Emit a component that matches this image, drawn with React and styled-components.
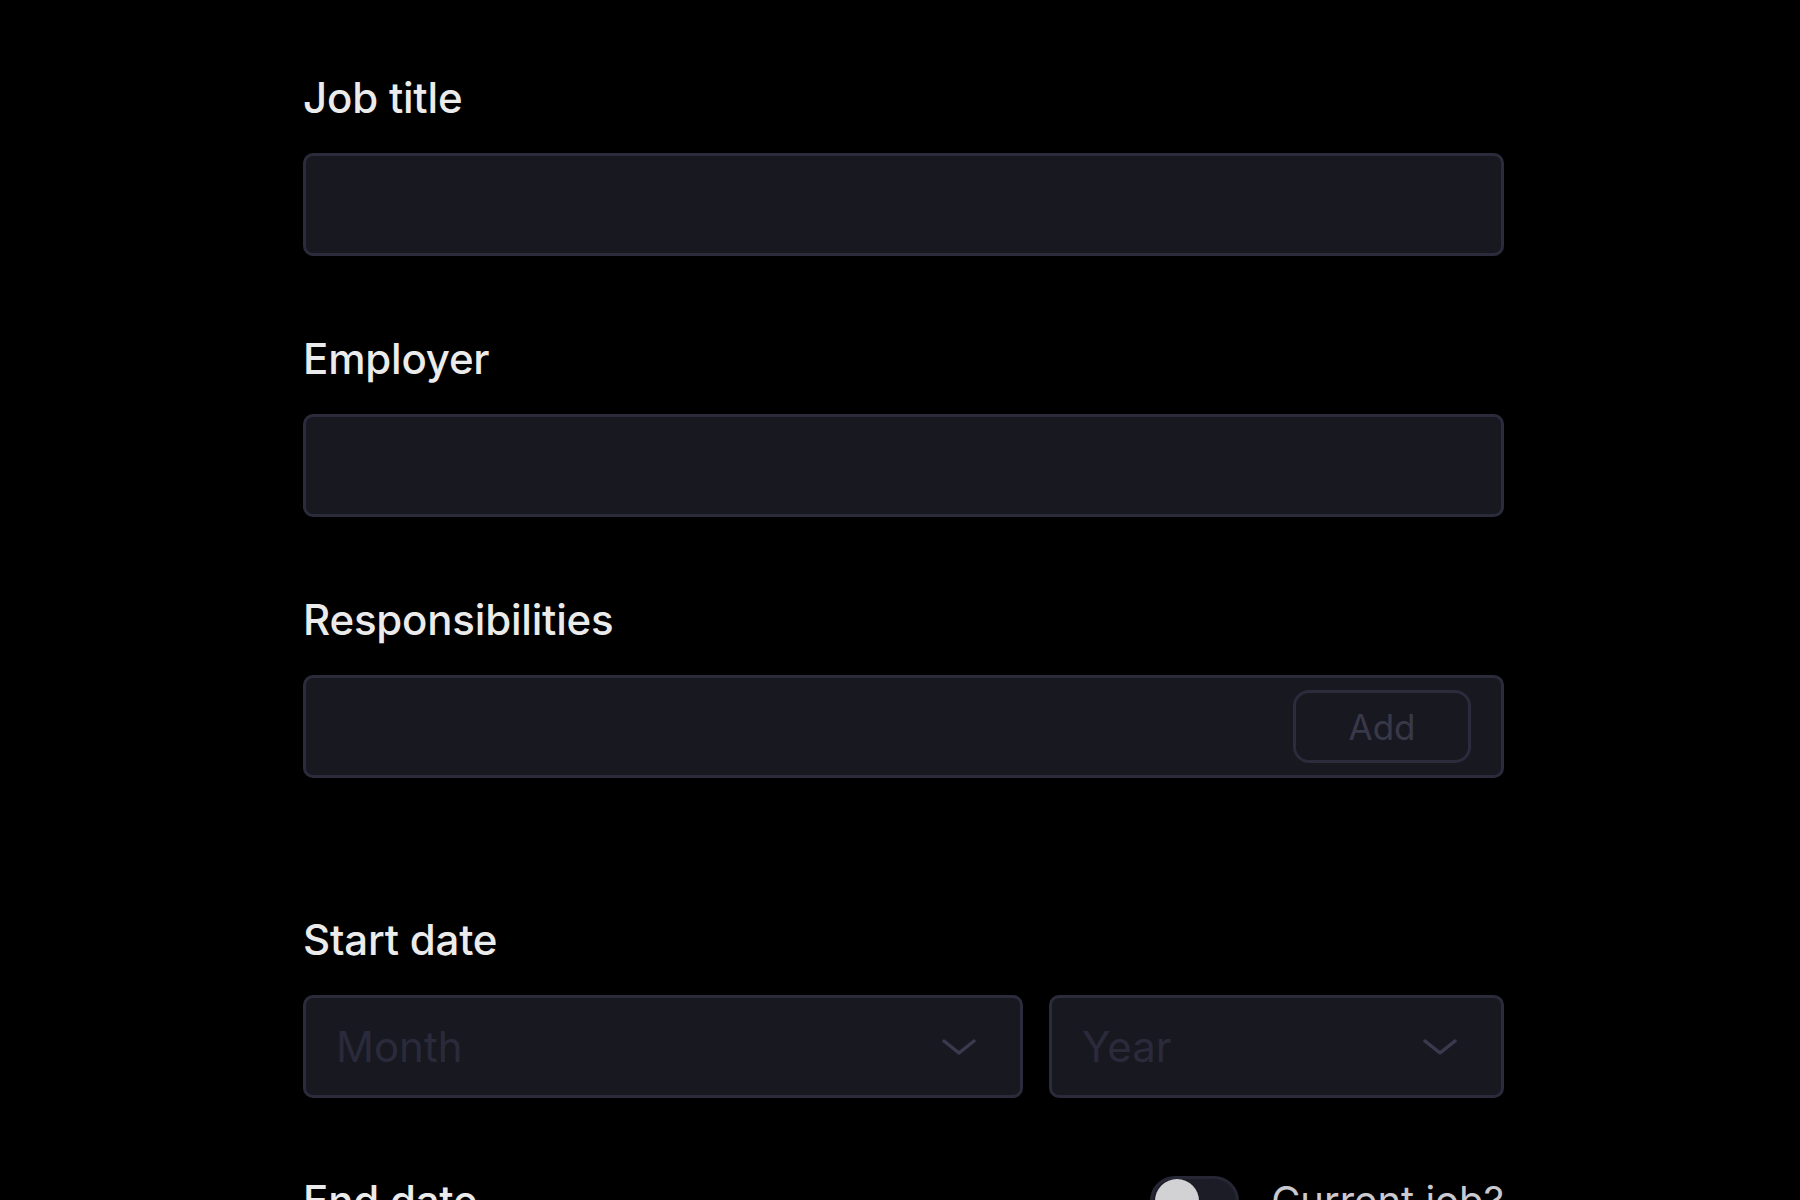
import styled, { createGlobalStyle } from "styled-components";

const GlobalStyle = createGlobalStyle`
    html, body {
        margin: 0;
        padding: 0;
        background: #000;
    }
    body {
        font-family: Inter, "Noto Sans", sans-serif;
        color: #ebebeb;
    }
`

const Page = styled.div`
    min-height: 1200px;
    padding: 72px 0 0 303px;
    box-sizing: border-box;
`

const Form = styled.form`
    width: 1201px;
    display: flex;
    flex-direction: column;
    gap: 77px;
`

const Field = styled.div`
    display: flex;
    flex-direction: column;
    gap: 29px;
`

const LabelRow = styled.div`
    display: flex;
    align-items: center;
    justify-content: space-between;
`

const Label = styled.label`
    font-size: 42px;
    line-height: 52px;
    font-weight: 500;
    letter-spacing: -0.2px;
    color: #ebebeb;
`

const InputBox = styled.div`
    height: 103px;
    box-sizing: border-box;
    background: #181821;
    border: 3px solid #2b2b3b;
    border-radius: 10px;
    display: flex;
    align-items: center;
    padding: 0 30px;
    gap: 20px;

    input {
        flex: 1;
        min-width: 0;
        background: transparent;
        border: 0;
        outline: none;
        font: inherit;
        font-size: 42px;
        color: #ebebeb;
    }
`

const AddButton = styled.button`
    width: 178px;
    height: 73px;
    box-sizing: border-box;
    background: transparent;
    border: 3px solid #2b2b3b;
    border-radius: 16px;
    font-family: Inter, sans-serif;
    font-size: 35px;
    font-weight: 400;
    color: #383848;
    cursor: pointer;
`

const ResponsibilityList = styled.ul`
    list-style: none;
    margin: 30px 0 0;
    padding: 0;
    min-height: 29px;
`

const SelectRow = styled.div`
    display: grid;
    grid-template-columns: 1fr 455px;
    gap: 26px;
`

const Select = styled.div`
    height: 103px;
    box-sizing: border-box;
    background: #181821;
    border: 3px solid #2b2b3b;
    border-radius: 10px;
    display: flex;
    align-items: center;
    justify-content: space-between;
    padding: 0 44px 0 30px;
    font-size: 42px;
    color: #2a2a3b;
`

const Chevron = () => (
    <svg width="34" height="18" viewBox="0 0 34 18" fill="none">
        <path d="M2 3 L17 15 L32 3" stroke="#3a3a4f" strokeWidth="3.5" strokeLinecap="round" strokeLinejoin="round"/>
    </svg>
)

const ToggleWrap = styled.label`
    display: flex;
    align-items: center;
    gap: 32px;
    font-size: 40px;
    line-height: 52px;
    font-weight: 400;
    color: #c9c9cf;
`

const Track = styled.span`
    width: 89px;
    height: 50px;
    box-sizing: border-box;
    border-radius: 25px;
    background: #1c1c27;
    border: 3px solid #262634;
    display: flex;
    align-items: center;
    padding: 0 2px;
`

const Knob = styled.span`
    width: 44px;
    height: 44px;
    border-radius: 50%;
    background: #d2d2d4;
`

export default function App() {
    return (
        <>
            <GlobalStyle/>
            <Page>
                <Form onSubmit={(e) => e.preventDefault()}>
                    <Field>
                        <Label htmlFor="job-title">Job title</Label>
                        <InputBox><input id="job-title" type="text"/></InputBox>
                    </Field>
                    <Field>
                        <Label htmlFor="employer">Employer</Label>
                        <InputBox><input id="employer" type="text"/></InputBox>
                    </Field>
                    <Field>
                        <Label htmlFor="resp">Responsibilities</Label>
                        <div>
                            <InputBox>
                                <input id="resp" type="text"/>
                                <AddButton type="button">Add</AddButton>
                            </InputBox>
                            <ResponsibilityList/>
                        </div>
                    </Field>
                    <Field>
                        <Label>Start date</Label>
                        <SelectRow>
                            <Select>Month<Chevron/></Select>
                            <Select>Year<Chevron/></Select>
                        </SelectRow>
                    </Field>
                    <Field>
                        <LabelRow>
                            <Label>End date</Label>
                            <ToggleWrap>
                                <Track><Knob/></Track>
                                Current job?
                            </ToggleWrap>
                        </LabelRow>
                        <SelectRow>
                            <Select>Month<Chevron/></Select>
                            <Select>Year<Chevron/></Select>
                        </SelectRow>
                    </Field>
                </Form>
            </Page>
        </>
    )
}
